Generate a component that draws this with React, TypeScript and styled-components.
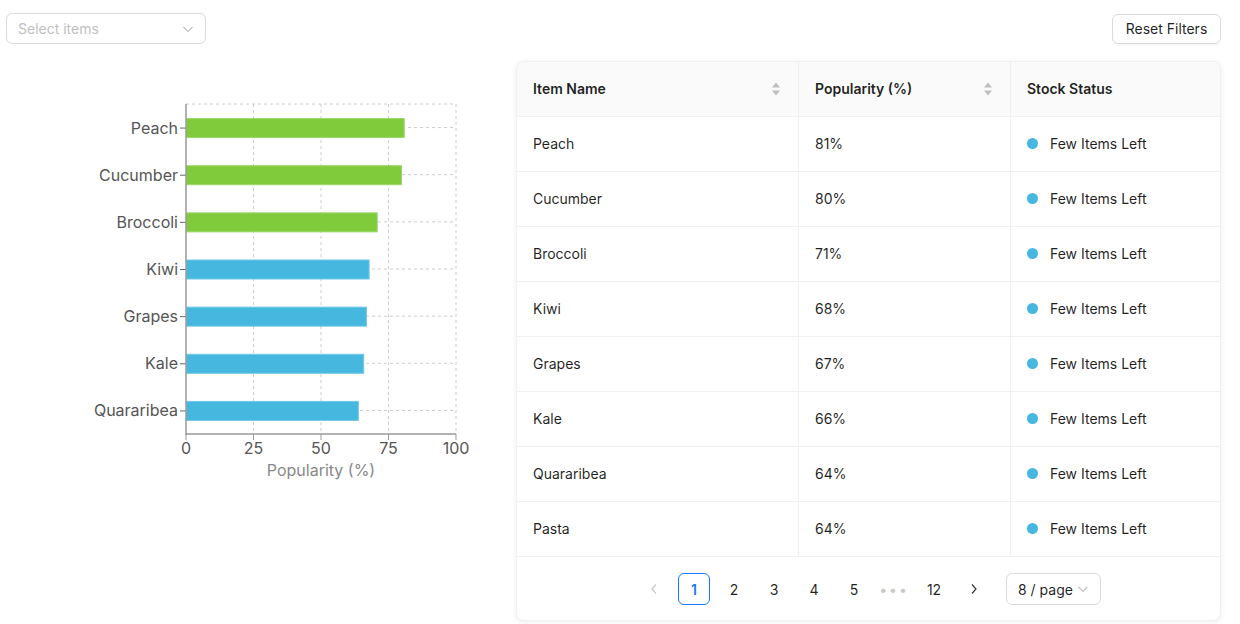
import React from "react";
import styled, { createGlobalStyle } from "styled-components";

const Global = createGlobalStyle`
  html, body { margin: 0; padding: 0; background: #fff; }
  body { font-family: Inter, "Noto Sans", sans-serif; color: rgba(0,0,0,0.88); }
  * { box-sizing: border-box; }
`;

const Page = styled.div`
  width: 1240px;
  height: 624px;
  padding: 13px 19px 0 6px;
  display: flex;
  flex-direction: column;
  gap: 17px;
`;

const TopBar = styled.div`
  display: flex;
  justify-content: space-between;
  align-items: flex-start;
  height: 31px;
`;

const SelectBox = styled.div`
  width: 200px;
  height: 31px;
  border: 1px solid #d9d9d9;
  border-radius: 6px;
  display: flex;
  align-items: center;
  justify-content: space-between;
  padding: 0 11px;
  font-size: 14px;
  color: #bfbfbf;
`;

const Button = styled.button`
  margin-top: 1px;
  width: 109px;
  height: 30px;
  border: 1px solid #d9d9d9;
  border-radius: 6px;
  background: #fff;
  font-family: Inter, "Noto Sans", sans-serif;
  font-size: 14px;
  color: rgba(0,0,0,0.88);
  box-shadow: 0 2px 0 rgba(0,0,0,0.02);
  padding: 0 0 1px;
`;

const Main = styled.div`
  display: flex;
`;

const ChartCol = styled.div`
  width: 510px;
  height: 560px;
`;

const Card = styled.div`
  width: 705px;
  height: 560px;
  border-radius: 8px;
  border: 1px solid #f0f0f0;
  background: #fff;
  box-shadow: 0 1px 6px rgba(0,0,0,0.07);
  overflow: hidden;
  display: flex;
  flex-direction: column;
`;

const Table = styled.div`
  display: grid;
  grid-template-columns: 282px 212px 1fr;
`;

const HeadCell = styled.div<{ $last?: boolean }>`
  height: 55px;
  background: #fafafa;
  font-weight: 600;
  font-size: 14px;
  display: flex;
  align-items: center;
  justify-content: space-between;
  padding: 0 17px 1px 16px;
  border-bottom: 1px solid #f0f0f0;
  border-right: ${(p) => (p.$last ? "none" : "1px solid #f0f0f0")};
`;

const Cell = styled.div<{ $last?: boolean }>`
  height: 55px;
  font-size: 14px;
  display: flex;
  align-items: center;
  padding: 0 16px 2px;
  border-bottom: 1px solid #f0f0f0;
  border-right: ${(p) => (p.$last ? "none" : "1px solid #f0f0f0")};
`;

const Dot = styled.span`
  width: 11px;
  height: 11px;
  border-radius: 50%;
  background: #46b7e0;
  margin-right: 12px;
`;

const Sorter = styled.span`
  display: flex;
  flex-direction: column;
  gap: 2px;
`;

const Pager = styled.div`
  flex: 1;
  display: flex;
  align-items: center;
  justify-content: center;
  padding: 1px 0 0 2px;
`;

const PageItem = styled.div<{ $active?: boolean; $muted?: boolean }>`
  width: 32px;
  height: 32px;
  margin-right: 8px;
  display: flex;
  align-items: center;
  justify-content: center;
  font-size: 14px;
  border-radius: 6px;
  border: 1px solid ${(p) => (p.$active ? "#1677ff" : "transparent")};
  color: ${(p) => (p.$active ? "#1677ff" : p.$muted ? "#c8c8c8" : "rgba(0,0,0,0.88)")};
  font-weight: ${(p) => (p.$active ? 600 : 400)};
  letter-spacing: ${(p) => (p.$muted ? "2px" : "0")};
`;

const SizeChanger = styled.div`
  margin-left: 8px;
  width: 95px;
  height: 32px;
  border: 1px solid #d9d9d9;
  border-radius: 6px;
  display: flex;
  align-items: center;
  justify-content: space-between;
  padding: 0 11px;
  font-size: 14px;
  color: rgba(0,0,0,0.88);
`;

const ChevronDown = ({ color = "#bfbfbf" }: { color?: string }) => (
  <svg width="12" height="12" viewBox="0 0 12 12">
    <path d="M1.5 4 L6 8.5 L10.5 4" fill="none" stroke={color} strokeWidth="1.1" />
  </svg>
);

const SortIcon = () => (
  <Sorter>
    <svg width="10" height="6" viewBox="0 0 10 6"><path d="M5 0.5 L9 5.5 L1 5.5 Z" fill="#bfbfbf" /></svg>
    <svg width="10" height="6" viewBox="0 0 10 6"><path d="M1 0.5 L9 0.5 L5 5.5 Z" fill="#bfbfbf" /></svg>
  </Sorter>
);

const data = [
  { name: "Peach", v: 81, green: true },
  { name: "Cucumber", v: 80, green: true },
  { name: "Broccoli", v: 71, green: true },
  { name: "Kiwi", v: 68 },
  { name: "Grapes", v: 67 },
  { name: "Kale", v: 66 },
  { name: "Quararibea", v: 64 },
];

const rows = [
  ["Peach", "81%"],
  ["Cucumber", "80%"],
  ["Broccoli", "71%"],
  ["Kiwi", "68%"],
  ["Grapes", "67%"],
  ["Kale", "66%"],
  ["Quararibea", "64%"],
  ["Pasta", "64%"],
];

const Chart = () => {
  const x0 = 186, x1 = 456, y0 = 104, y1 = 434;
  const band = (y1 - y0) / data.length;
  const sx = (v: number) => x0 + ((x1 - x0) * v) / 100;
  const font = "Inter, 'Noto Sans', sans-serif";
  return (
    <svg width="510" height="560" viewBox="6 61 510 560">
      {[25, 50, 75, 100].map((t) => (
        <line key={t} x1={sx(t)} x2={sx(t)} y1={y0} y2={y1} stroke="#ccc" strokeDasharray="3 3" />
      ))}
      <line x1={x0} x2={x1} y1={y0} y2={y0} stroke="#ccc" strokeDasharray="3 3" />
      {data.map((d, i) => {
        const c = y0 + band * (i + 0.5);
        return (
          <line key={d.name} x1={x0} x2={x1} y1={c} y2={c} stroke="#ccc" strokeDasharray="3 3" />
        );
      })}
      {data.map((d, i) => {
        const c = y0 + band * (i + 0.5);
        const fill = d.green ? "#7fcb3b" : "#46b7df";
        const stroke = d.green ? "#9bd86a" : "#6fc8e8";
        return (
          <g key={d.name}>
            <rect x={x0 + 0.5} y={c - 9} width={sx(d.v) - x0 - 1} height={19} fill={fill} stroke={stroke} strokeWidth="1" />
            <line x1={x0 - 6} x2={x0} y1={c + 0.5} y2={c + 0.5} stroke="#666" strokeWidth="1" />
            <text x={x0 - 8} y={c + 6} textAnchor="end" fontFamily={font} fontSize="16" fill="#555">
              {d.name}
            </text>
          </g>
        );
      })}
      <line x1={x0} x2={x0} y1={y0} y2={y1 + 1} stroke="#999" strokeWidth="1.5" />
      <line x1={x0} x2={x1} y1={y1} y2={y1} stroke="#999" strokeWidth="1.5" />
      {[0, 25, 50, 75, 100].map((t) => (
        <g key={t}>
          <line x1={sx(t)} x2={sx(t)} y1={y1} y2={y1 + 6} stroke="#999" strokeWidth="1" />
          <text x={sx(t)} y={y1 + 20} textAnchor="middle" fontFamily={font} fontSize="16" fill="#555">
            {t}
          </text>
        </g>
      ))}
      <text x={(x0 + x1) / 2} y={y1 + 42} textAnchor="middle" fontFamily={font} fontSize="16" fill="#888">
        Popularity (%)
      </text>
    </svg>
  );
};

export default function App() {
  return (
    <>
      <Global />
      <Page>
        <TopBar>
          <SelectBox>
            <span>Select items</span>
            <ChevronDown />
          </SelectBox>
          <Button>Reset Filters</Button>
        </TopBar>
        <Main>
          <ChartCol>
            <Chart />
          </ChartCol>
          <Card>
            <Table>
              <HeadCell>
                <span>Item Name</span>
                <SortIcon />
              </HeadCell>
              <HeadCell>
                <span>Popularity (%)</span>
                <SortIcon />
              </HeadCell>
              <HeadCell $last>
                <span>Stock Status</span>
              </HeadCell>
              {rows.map(([n, p]) => (
                <React.Fragment key={n}>
                  <Cell>{n}</Cell>
                  <Cell>{p}</Cell>
                  <Cell $last>
                    <Dot />
                    Few Items Left
                  </Cell>
                </React.Fragment>
              ))}
            </Table>
            <Pager>
              <PageItem $muted>
                <svg width="8" height="12" viewBox="0 0 8 12"><path d="M6 1.5 L2 6 L6 10.5" fill="none" stroke="#c8c8c8" strokeWidth="1.2" /></svg>
              </PageItem>
              <PageItem $active>1</PageItem>
              <PageItem>2</PageItem>
              <PageItem>3</PageItem>
              <PageItem>4</PageItem>
              <PageItem>5</PageItem>
              <PageItem $muted>•••</PageItem>
              <PageItem>12</PageItem>
              <PageItem>
                <svg width="8" height="12" viewBox="0 0 8 12"><path d="M2 1.5 L6 6 L2 10.5" fill="none" stroke="#333" strokeWidth="1.2" /></svg>
              </PageItem>
              <SizeChanger>
                <span>8 / page</span>
                <ChevronDown />
              </SizeChanger>
            </Pager>
          </Card>
        </Main>
      </Page>
    </>
  );
}
